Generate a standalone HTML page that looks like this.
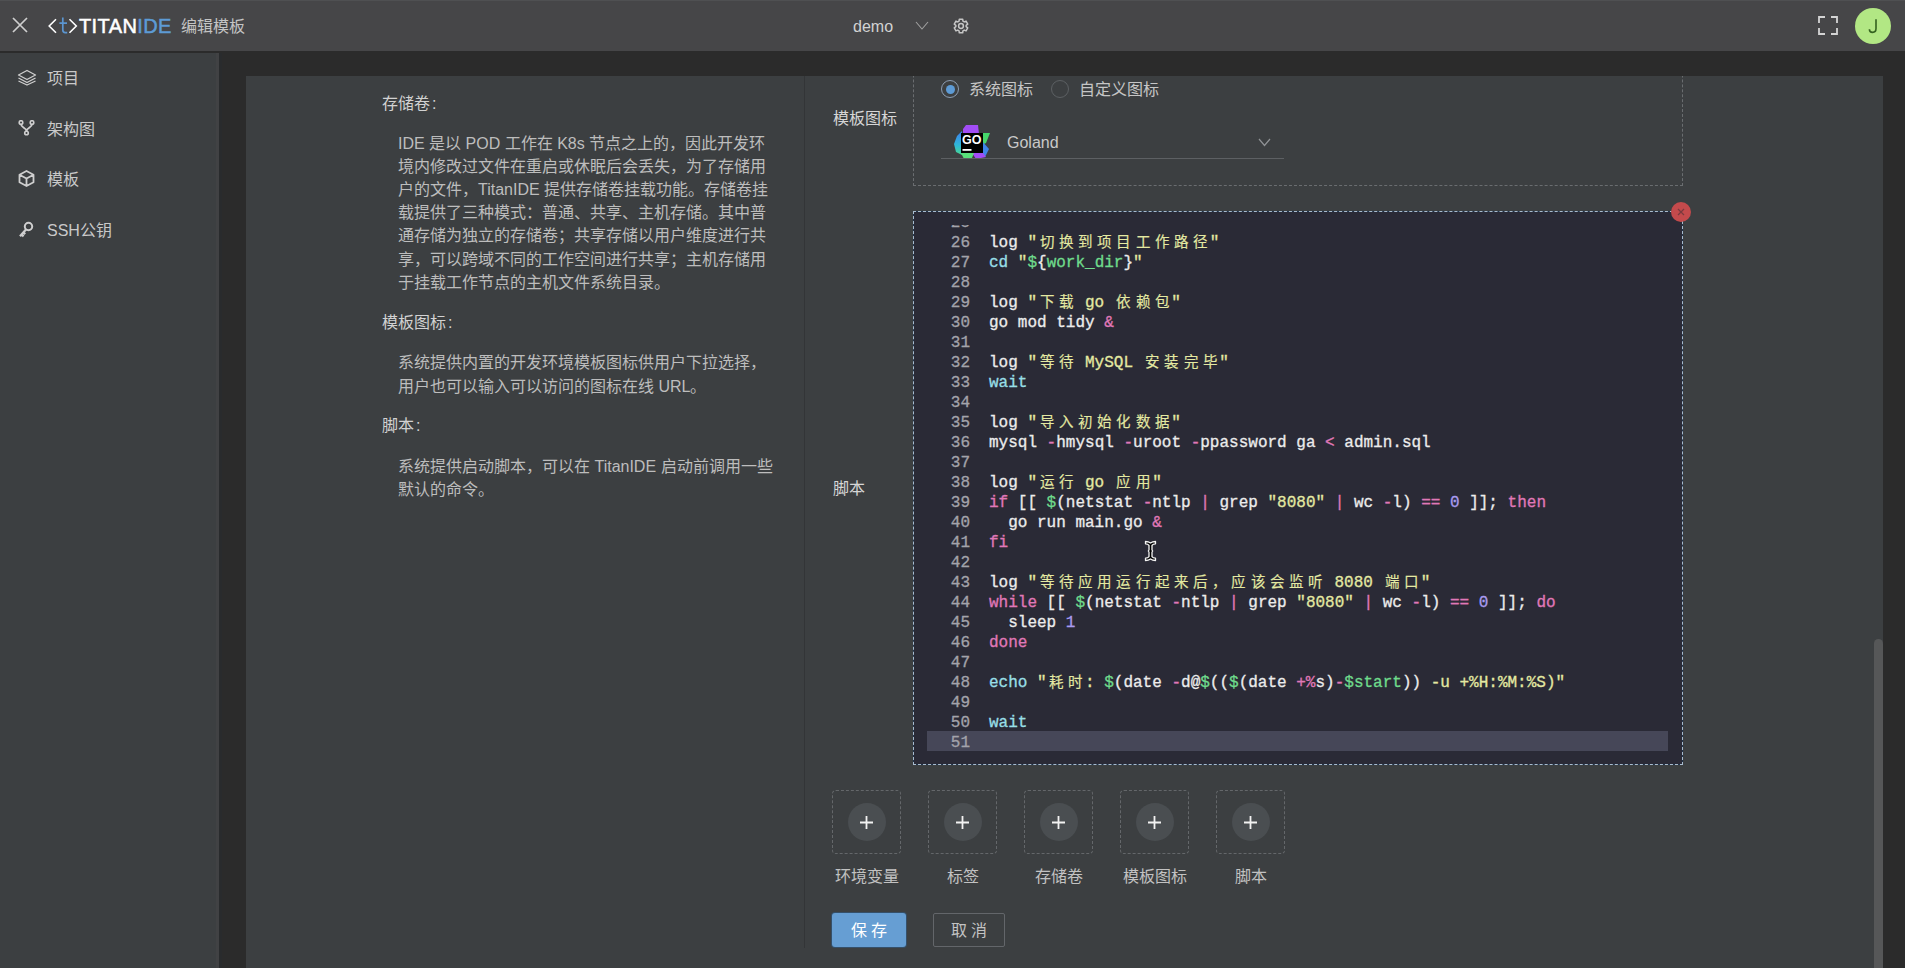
<!DOCTYPE html>
<html lang="zh-CN"><head><meta charset="utf-8">
<style>
*{box-sizing:border-box;margin:0;padding:0}
html,body{width:1905px;height:968px;overflow:hidden;background:#2b2b2b;font-family:"Liberation Sans",sans-serif;}
.a{position:absolute}
#hdr{left:0;top:0;width:1905px;height:51px;background:#464648}
#side{left:0;top:53px;width:219px;height:915px;background:#3c3f41;}
#panel{left:246px;top:76px;width:1637px;height:892px;background:#3c3f41;overflow:hidden}
#pin{left:-246px;top:-76px;width:1905px;height:968px}
.t{white-space:nowrap;}
.nav{left:47px;margin-top:1px;font-size:16px;color:#c9c9c9;line-height:20px;white-space:nowrap}
.doc{color:#bdbdbd;font-size:16px;line-height:20px;white-space:nowrap;left:398px}
.hd{color:#d2d2d2;font-size:16px;line-height:20px;white-space:nowrap;left:382px}
.lbl{color:#d6d6d6;font-size:16px;line-height:20px;white-space:nowrap;left:833px}
.code{font-family:"Liberation Mono",monospace;font-size:16px;line-height:20px;white-space:pre;color:#ececec;-webkit-text-stroke:0.3px currentColor}
.ln{color:#a3a3ab;text-align:right;width:43px}
.y{color:#e4e9a2}.g{color:#6fdb8c}.c{color:#98dfe6}.p{color:#e078b8}.v{color:#a99bf0}
.w{display:inline-block;width:19.2px;text-align:center;font-size:14.5px;vertical-align:top;line-height:20px;-webkit-text-stroke:0.15px currentColor}
</style></head><body>
<div id="hdr" class="a">
  <div class="a" style="left:0;top:0;width:1905px;height:1px;background:#4f5052"></div>
  <svg class="a" style="left:12px;top:17px" width="16" height="16" viewBox="0 0 16 16"><path d="M1 1L15 15M15 1L1 15" stroke="#cfcfcf" stroke-width="1.7" fill="none"/></svg>
  <svg class="a" style="left:48px;top:18px" width="30" height="16" viewBox="0 0 30 16"><path d="M8 1.2L1.2 8L8 14.8M21.5 1.2L28.3 8L21.5 14.8" stroke="#fff" stroke-width="1.6" fill="none"/></svg>
  <svg class="a" style="left:58px;top:16px" width="12" height="19" viewBox="58 16 12 19"><path d="M62.8 17.6V30C62.8 32 63.8 32.6 65.2 32.6H67.2M59.4 23.2H67" stroke="#5b95d0" stroke-width="1.7" fill="none"/></svg>
  <div class="a t" style="left:79px;top:14px;font-size:20px;line-height:24px;color:#fff;letter-spacing:0.4px;-webkit-text-stroke:0.5px #fff">TITAN<span style="color:#5d9bd5;-webkit-text-stroke:0.5px #5d9bd5">IDE</span></div>
  <div class="a t" style="left:181px;top:17px;font-size:16px;line-height:20px;color:#c4c4c4">编辑模板</div>
  <div class="a t" style="left:853px;top:17px;font-size:16px;line-height:20px;color:#d2d2d2">demo</div>
  <svg class="a" style="left:915px;top:21px" width="14" height="9" viewBox="0 0 14 9"><path d="M1 1L7 8L13 1" stroke="#a0a0a0" stroke-width="1.1" fill="none"/></svg>
  <svg class="a" style="left:951.5px;top:16.5px" width="18" height="18" viewBox="0 0 18 18"><path d="M7.05 4.18 L7.31 2.21 L10.69 2.21 L10.95 4.18 L12.20 4.90 L14.04 4.14 L15.73 7.07 L14.15 8.28 L14.15 9.72 L15.73 10.93 L14.04 13.86 L12.20 13.10 L10.95 13.82 L10.69 15.79 L7.31 15.79 L7.05 13.82 L5.80 13.10 L3.96 13.86 L2.27 10.93 L3.85 9.72 L3.85 8.28 L2.27 7.07 L3.96 4.14 L5.80 4.90Z" stroke="#c6c6c6" stroke-width="1.5" fill="none" stroke-linejoin="round"/><circle cx="9" cy="9" r="2.4" stroke="#c6c6c6" stroke-width="1.5" fill="none"/></svg>
  <svg class="a" style="left:1818px;top:16px" width="20" height="19" viewBox="0 0 20 19"><path d="M1 7V1H7M13 1H19V7M19 12V18H13M7 18H1V12" stroke="#d4d4d4" stroke-width="1.8" fill="none"/></svg>
  <div class="a" style="left:1855px;top:8px;width:36px;height:36px;border-radius:50%;background:#b2e784"></div>
  <svg class="a" style="left:1865px;top:17px" width="16" height="18" viewBox="1865 17 16 18"><path d="M1876 19.2V28.6C1876 31 1874.7 32.4 1872.6 32.4C1870.5 32.4 1869.4 31 1869.4 29.2" stroke="#34621f" stroke-width="1.6" fill="none"/></svg>
</div>
<div id="side" class="a">
  <svg class="a" style="left:17px;top:16px" width="20" height="17" viewBox="0 0 20 17"><path d="M10 1.5L18.5 6L10 10.5L1.5 6Z" stroke="#cfcfcf" stroke-width="1.3" fill="none" stroke-linejoin="round"/><path d="M1.5 9L10 13.5L18.5 9M1.5 12L10 16L18.5 12" stroke="#cfcfcf" stroke-width="1.3" fill="none" stroke-linejoin="round"/></svg>
  <div class="a nav" style="top:15px">项目</div>
  <svg class="a" style="left:18px;top:67px" width="17" height="16" viewBox="0 0 17 16"><circle cx="3" cy="2.5" r="1.8" stroke="#cfcfcf" stroke-width="1.6" fill="none"/><circle cx="14" cy="2.5" r="1.8" stroke="#cfcfcf" stroke-width="1.6" fill="none"/><circle cx="8.5" cy="13" r="1.8" stroke="#cfcfcf" stroke-width="1.6" fill="none"/><path d="M3 4.3C3 8 8.5 7.5 8.5 11.2M14 4.3C14 8 8.5 7.5 8.5 11.2" stroke="#cfcfcf" stroke-width="1.8" fill="none"/></svg>
  <div class="a nav" style="top:66px">架构图</div>
  <svg class="a" style="left:18px;top:117px" width="17" height="17" viewBox="0 0 17 17"><path d="M8.5 1L15.5 4.7V12.3L8.5 16L1.5 12.3V4.7Z M1.5 4.7L8.5 8.5L15.5 4.7M8.5 8.5V16" stroke="#cfcfcf" stroke-width="1.8" fill="none" stroke-linejoin="round"/></svg>
  <div class="a nav" style="top:116px">模板</div>
  <svg class="a" style="left:18px;top:168px" width="16" height="18" viewBox="0 0 16 18"><circle cx="10.5" cy="5.5" r="3.7" stroke="#cfcfcf" stroke-width="2" fill="none"/><path d="M8.2 8.3L2 15.3M3.6 13.5L5.6 15.4M5.4 11.5L7.2 13.2" stroke="#cfcfcf" stroke-width="2.3" fill="none"/></svg>
  <div class="a nav" style="top:167px">SSH公钥</div>
  <div class="a" style="left:216px;top:0;width:3px;height:915px;background:#414244"></div>
</div>
<div class="a" style="left:219px;top:53px;width:3px;height:915px;background:#292b2d"></div>
<div id="panel" class="a"><div id="pin" class="a">
  <!-- left docs -->
  <div class="a" style="left:804px;top:76px;width:1px;height:872px;background:#333537"></div>
  <div class="a hd" style="top:94px">存储卷<span style="margin-left:2px">:</span></div>
  <div class="a doc" style="top:134px">IDE 是以 POD 工作在 K8s 节点之上的，因此开发环</div>
  <div class="a doc" style="top:157px">境内修改过文件在重启或休眠后会丢失，为了存储用</div>
  <div class="a doc" style="top:180px">户的文件，TitanIDE 提供存储卷挂载功能。存储卷挂</div>
  <div class="a doc" style="top:203px">载提供了三种模式：普通、共享、主机存储。其中普</div>
  <div class="a doc" style="top:226px">通存储为独立的存储卷；共享存储以用户维度进行共</div>
  <div class="a doc" style="top:250px">享，可以跨域不同的工作空间进行共享；主机存储用</div>
  <div class="a doc" style="top:273px">于挂载工作节点的主机文件系统目录。</div>
  <div class="a hd" style="top:313px">模板图标<span style="margin-left:2px">:</span></div>
  <div class="a doc" style="top:353px">系统提供内置的开发环境模板图标供用户下拉选择，</div>
  <div class="a doc" style="top:377px">用户也可以输入可以访问的图标在线 URL。</div>
  <div class="a hd" style="top:416px">脚本<span style="margin-left:2px">:</span></div>
  <div class="a doc" style="top:457px">系统提供启动脚本，可以在 TitanIDE 启动前调用一些</div>
  <div class="a doc" style="top:480px">默认的命令。</div>

  <!-- form labels -->
  <div class="a lbl" style="top:109px">模板图标</div>
  <div class="a lbl" style="top:479px">脚本</div>

  <!-- icon box -->
  <div class="a" style="left:913px;top:40px;width:770px;height:146px;border:1px dashed #6a6d70"></div>
  <div class="a" style="left:941px;top:80px;width:18px;height:18px;border-radius:50%;border:1.5px solid #8c9db2"></div>
  <div class="a" style="left:945.5px;top:84.5px;width:9px;height:9px;border-radius:50%;background:#5d9bd5"></div>
  <div class="a lbl" style="left:969px;top:80px;color:#c6c6c6">系统图标</div>
  <div class="a" style="left:1050.5px;top:80px;width:18px;height:18px;border-radius:50%;border:1px solid #5c6063"></div>
  <div class="a lbl" style="left:1079px;top:80px;color:#c6c6c6">自定义图标</div>
  <!-- goland logo -->
  <svg class="a" style="left:953px;top:124px" width="38" height="36" viewBox="0 0 38 36">
    <defs><linearGradient id="gl1" x1="0" y1="0" x2="0" y2="1"><stop offset="0" stop-color="#3d7ff0"/><stop offset="0.6" stop-color="#2fb8d8"/><stop offset="1" stop-color="#48d890"/></linearGradient></defs>
    <path d="M10 5L13 1H25L26 10H10Z" fill="#a24df6"/>
    <path d="M4 12L9 7V31L3 28L1 20Z" fill="url(#gl1)"/>
    <path d="M27 9H37L33 19L29 21Z" fill="#46d86a"/>
    <path d="M29 17L36 25L32 33L28 30Z" fill="#3f84e8"/>
    <path d="M19 29H30L33 33L23 35Z" fill="#a24df6"/>
    <path d="M8 29H21L19 34L11 35Z" fill="#58e07a"/>
    <rect x="8" y="9" width="22" height="20" fill="#000"/>
    <text x="18.8" y="20.3" font-family="Liberation Sans" font-weight="bold" font-size="12.5" fill="#fff" text-anchor="middle">GO</text>
    <rect x="9.5" y="25" width="9" height="1.8" fill="#fff"/>
  </svg>
  <div class="a t" style="left:1007px;top:133px;font-size:16px;line-height:20px;color:#c9c9c9">Goland</div>
  <svg class="a" style="left:1258px;top:138px" width="13" height="9" viewBox="0 0 13 9"><path d="M1 1L6.5 7.5L12 1" stroke="#909396" stroke-width="1.2" fill="none"/></svg>
  <div class="a" style="left:941px;top:158px;width:343px;height:1px;background:#5d6063"></div>

  <!-- editor -->
  <div class="a" style="left:913px;top:211px;width:770px;height:554px;background:#2a2a36;border:1px solid #22354c"></div>
  <div class="a" style="left:913px;top:211px;width:770px;height:554px;border:1px dashed #a9bccf"></div>
  <div class="a" style="left:927px;top:731px;width:741px;height:20px;background:#464758"></div>
  <div class="a" id="code" style="left:927px;top:224.5px;width:741px;height:529px;overflow:hidden">
    <div class="a code" style="left:0;top:-11.5px;width:741px"><div style="position:relative;height:20px"><span class="ln a" style="left:0;top:0">25</span><span class="a" style="left:62px;top:0"></span></div><div style="position:relative;height:20px"><span class="ln a" style="left:0;top:0">26</span><span class="a" style="left:62px;top:0">log <span class="y">"<span class="w">切</span><span class="w">换</span><span class="w">到</span><span class="w">项</span><span class="w">目</span><span class="w">工</span><span class="w">作</span><span class="w">路</span><span class="w">径</span>"</span></span></div><div style="position:relative;height:20px"><span class="ln a" style="left:0;top:0">27</span><span class="a" style="left:62px;top:0"><span class="c">cd</span> <span class="y">"</span><span class="g">$</span>{<span class="g">work_dir</span>}<span class="y">"</span></span></div><div style="position:relative;height:20px"><span class="ln a" style="left:0;top:0">28</span><span class="a" style="left:62px;top:0"></span></div><div style="position:relative;height:20px"><span class="ln a" style="left:0;top:0">29</span><span class="a" style="left:62px;top:0">log <span class="y">"<span class="w">下</span><span class="w">载</span> go <span class="w">依</span><span class="w">赖</span><span class="w">包</span>"</span></span></div><div style="position:relative;height:20px"><span class="ln a" style="left:0;top:0">30</span><span class="a" style="left:62px;top:0">go mod tidy <span class="p">&amp;</span></span></div><div style="position:relative;height:20px"><span class="ln a" style="left:0;top:0">31</span><span class="a" style="left:62px;top:0"></span></div><div style="position:relative;height:20px"><span class="ln a" style="left:0;top:0">32</span><span class="a" style="left:62px;top:0">log <span class="y">"<span class="w">等</span><span class="w">待</span> MySQL <span class="w">安</span><span class="w">装</span><span class="w">完</span><span class="w">毕</span>"</span></span></div><div style="position:relative;height:20px"><span class="ln a" style="left:0;top:0">33</span><span class="a" style="left:62px;top:0"><span class="c">wait</span></span></div><div style="position:relative;height:20px"><span class="ln a" style="left:0;top:0">34</span><span class="a" style="left:62px;top:0"></span></div><div style="position:relative;height:20px"><span class="ln a" style="left:0;top:0">35</span><span class="a" style="left:62px;top:0">log <span class="y">"<span class="w">导</span><span class="w">入</span><span class="w">初</span><span class="w">始</span><span class="w">化</span><span class="w">数</span><span class="w">据</span>"</span></span></div><div style="position:relative;height:20px"><span class="ln a" style="left:0;top:0">36</span><span class="a" style="left:62px;top:0">mysql <span class="p">-</span>hmysql <span class="p">-</span>uroot <span class="p">-</span>ppassword ga <span class="p">&lt;</span> admin.sql</span></div><div style="position:relative;height:20px"><span class="ln a" style="left:0;top:0">37</span><span class="a" style="left:62px;top:0"></span></div><div style="position:relative;height:20px"><span class="ln a" style="left:0;top:0">38</span><span class="a" style="left:62px;top:0">log <span class="y">"<span class="w">运</span><span class="w">行</span> go <span class="w">应</span><span class="w">用</span>"</span></span></div><div style="position:relative;height:20px"><span class="ln a" style="left:0;top:0">39</span><span class="a" style="left:62px;top:0"><span class="p">if</span> [[ <span class="g">$</span>(netstat <span class="p">-</span>ntlp <span class="p">|</span> grep <span class="y">"8080"</span> <span class="p">|</span> wc <span class="p">-</span>l) <span class="p">==</span> <span class="v">0</span> ]]; <span class="p">then</span></span></div><div style="position:relative;height:20px"><span class="ln a" style="left:0;top:0">40</span><span class="a" style="left:62px;top:0">  go run main.go <span class="p">&amp;</span></span></div><div style="position:relative;height:20px"><span class="ln a" style="left:0;top:0">41</span><span class="a" style="left:62px;top:0"><span class="p">fi</span></span></div><div style="position:relative;height:20px"><span class="ln a" style="left:0;top:0">42</span><span class="a" style="left:62px;top:0"></span></div><div style="position:relative;height:20px"><span class="ln a" style="left:0;top:0">43</span><span class="a" style="left:62px;top:0">log <span class="y">"<span class="w">等</span><span class="w">待</span><span class="w">应</span><span class="w">用</span><span class="w">运</span><span class="w">行</span><span class="w">起</span><span class="w">来</span><span class="w">后</span><span class="w">，</span><span class="w">应</span><span class="w">该</span><span class="w">会</span><span class="w">监</span><span class="w">听</span> 8080 <span class="w">端</span><span class="w">口</span>"</span></span></div><div style="position:relative;height:20px"><span class="ln a" style="left:0;top:0">44</span><span class="a" style="left:62px;top:0"><span class="p">while</span> [[ <span class="g">$</span>(netstat <span class="p">-</span>ntlp <span class="p">|</span> grep <span class="y">"8080"</span> <span class="p">|</span> wc <span class="p">-</span>l) <span class="p">==</span> <span class="v">0</span> ]]; <span class="p">do</span></span></div><div style="position:relative;height:20px"><span class="ln a" style="left:0;top:0">45</span><span class="a" style="left:62px;top:0">  sleep <span class="v">1</span></span></div><div style="position:relative;height:20px"><span class="ln a" style="left:0;top:0">46</span><span class="a" style="left:62px;top:0"><span class="p">done</span></span></div><div style="position:relative;height:20px"><span class="ln a" style="left:0;top:0">47</span><span class="a" style="left:62px;top:0"></span></div><div style="position:relative;height:20px"><span class="ln a" style="left:0;top:0">48</span><span class="a" style="left:62px;top:0"><span class="c">echo</span> <span class="y">"<span class="w">耗</span><span class="w">时</span>: </span><span class="g">$</span>(date <span class="p">-</span>d@<span class="g">$</span>((<span class="g">$</span>(date <span class="p">+%</span>s)<span class="p">-</span><span class="g">$start</span>))<span class="y"> -u +%H:%M:%S)"</span></span></div><div style="position:relative;height:20px"><span class="ln a" style="left:0;top:0">49</span><span class="a" style="left:62px;top:0"></span></div><div style="position:relative;height:20px"><span class="ln a" style="left:0;top:0">50</span><span class="a" style="left:62px;top:0"><span class="c">wait</span></span></div><div style="position:relative;height:20px"><span class="ln a" style="left:0;top:0">51</span><span class="a" style="left:62px;top:0"></span></div></div>
  </div>
  <div class="a" style="left:1671px;top:202px;width:20px;height:20px;border-radius:50%;background:#c44a4c"></div>
  <svg class="a" style="left:1677px;top:208px" width="8" height="8" viewBox="0 0 8 8"><path d="M1 1L7 7M7 1L1 7" stroke="#7a3a3e" stroke-width="1.2" fill="none"/></svg>
  <!-- text cursor -->
  <svg class="a" style="left:1144px;top:539.5px" width="13" height="22" viewBox="-1 -1 13 22"><path d="M0.5 0.5Q3.5 0.5 5.5 2Q7.5 0.5 10.5 0.5V2.8Q8 2.8 7 4.3V9L7.7 10L7 11V15.7Q8 17.2 10.5 17.2V19.5Q7.5 19.5 5.5 18Q3.5 19.5 0.5 19.5V17.2Q3 17.2 4 15.7V11L3.3 10L4 9V4.3Q3 2.8 0.5 2.8Z" fill="#000" stroke="#f4f4f4" stroke-width="1.3" stroke-linejoin="round"/></svg>

  <!-- add cards -->
  <div class="a" style="left:832px;top:790px;width:69px;height:64px;border:1px dashed #64676a;border-radius:4px"></div><div class="a" style="left:847.5px;top:803px;width:38px;height:38px;border-radius:50%;background:#4a4e51"></div><svg class="a" style="left:860px;top:816px" width="13" height="13" viewBox="0 0 13 13"><path d="M6.5 0V13M0 6.5H13" stroke="#f2f2f2" stroke-width="1.8"/></svg><div class="a t" style="left:816px;top:868px;width:101px;text-align:center;font-size:16px;line-height:18px;color:#c2c2c2">环境变量</div>
  <div class="a" style="left:928px;top:790px;width:69px;height:64px;border:1px dashed #64676a;border-radius:4px"></div><div class="a" style="left:943.5px;top:803px;width:38px;height:38px;border-radius:50%;background:#4a4e51"></div><svg class="a" style="left:956px;top:816px" width="13" height="13" viewBox="0 0 13 13"><path d="M6.5 0V13M0 6.5H13" stroke="#f2f2f2" stroke-width="1.8"/></svg><div class="a t" style="left:912px;top:868px;width:101px;text-align:center;font-size:16px;line-height:18px;color:#c2c2c2">标签</div>
  <div class="a" style="left:1024px;top:790px;width:69px;height:64px;border:1px dashed #64676a;border-radius:4px"></div><div class="a" style="left:1039.5px;top:803px;width:38px;height:38px;border-radius:50%;background:#4a4e51"></div><svg class="a" style="left:1052px;top:816px" width="13" height="13" viewBox="0 0 13 13"><path d="M6.5 0V13M0 6.5H13" stroke="#f2f2f2" stroke-width="1.8"/></svg><div class="a t" style="left:1008px;top:868px;width:101px;text-align:center;font-size:16px;line-height:18px;color:#c2c2c2">存储卷</div>
  <div class="a" style="left:1120px;top:790px;width:69px;height:64px;border:1px dashed #64676a;border-radius:4px"></div><div class="a" style="left:1135.5px;top:803px;width:38px;height:38px;border-radius:50%;background:#4a4e51"></div><svg class="a" style="left:1148px;top:816px" width="13" height="13" viewBox="0 0 13 13"><path d="M6.5 0V13M0 6.5H13" stroke="#f2f2f2" stroke-width="1.8"/></svg><div class="a t" style="left:1104px;top:868px;width:101px;text-align:center;font-size:16px;line-height:18px;color:#c2c2c2">模板图标</div>
  <div class="a" style="left:1216px;top:790px;width:69px;height:64px;border:1px dashed #64676a;border-radius:4px"></div><div class="a" style="left:1231.5px;top:803px;width:38px;height:38px;border-radius:50%;background:#4a4e51"></div><svg class="a" style="left:1244px;top:816px" width="13" height="13" viewBox="0 0 13 13"><path d="M6.5 0V13M0 6.5H13" stroke="#f2f2f2" stroke-width="1.8"/></svg><div class="a t" style="left:1200px;top:868px;width:101px;text-align:center;font-size:16px;line-height:18px;color:#c2c2c2">脚本</div>

  <!-- buttons -->
  <div class="a" style="left:832px;top:913px;width:74px;height:34px;border-radius:3px;background:#669ed3;box-shadow:0 0 0 1px #35506a"></div>
  <div class="a t" style="left:832px;top:922px;width:74px;text-align:center;font-size:16px;line-height:18px;color:#fff;letter-spacing:4px;text-indent:4px">保存</div>
  <div class="a" style="left:933px;top:913px;width:72px;height:34px;border-radius:2px;border:1px solid #63666a"></div>
  <div class="a t" style="left:933px;top:922px;width:72px;text-align:center;font-size:16px;line-height:18px;color:#c3c3c3;letter-spacing:4px;text-indent:4px">取消</div>

  <!-- scrollbar -->
  <div class="a" style="left:1874px;top:639px;width:9px;height:340px;border-radius:5px;background:#565758"></div>
</div></div>
</body></html>
